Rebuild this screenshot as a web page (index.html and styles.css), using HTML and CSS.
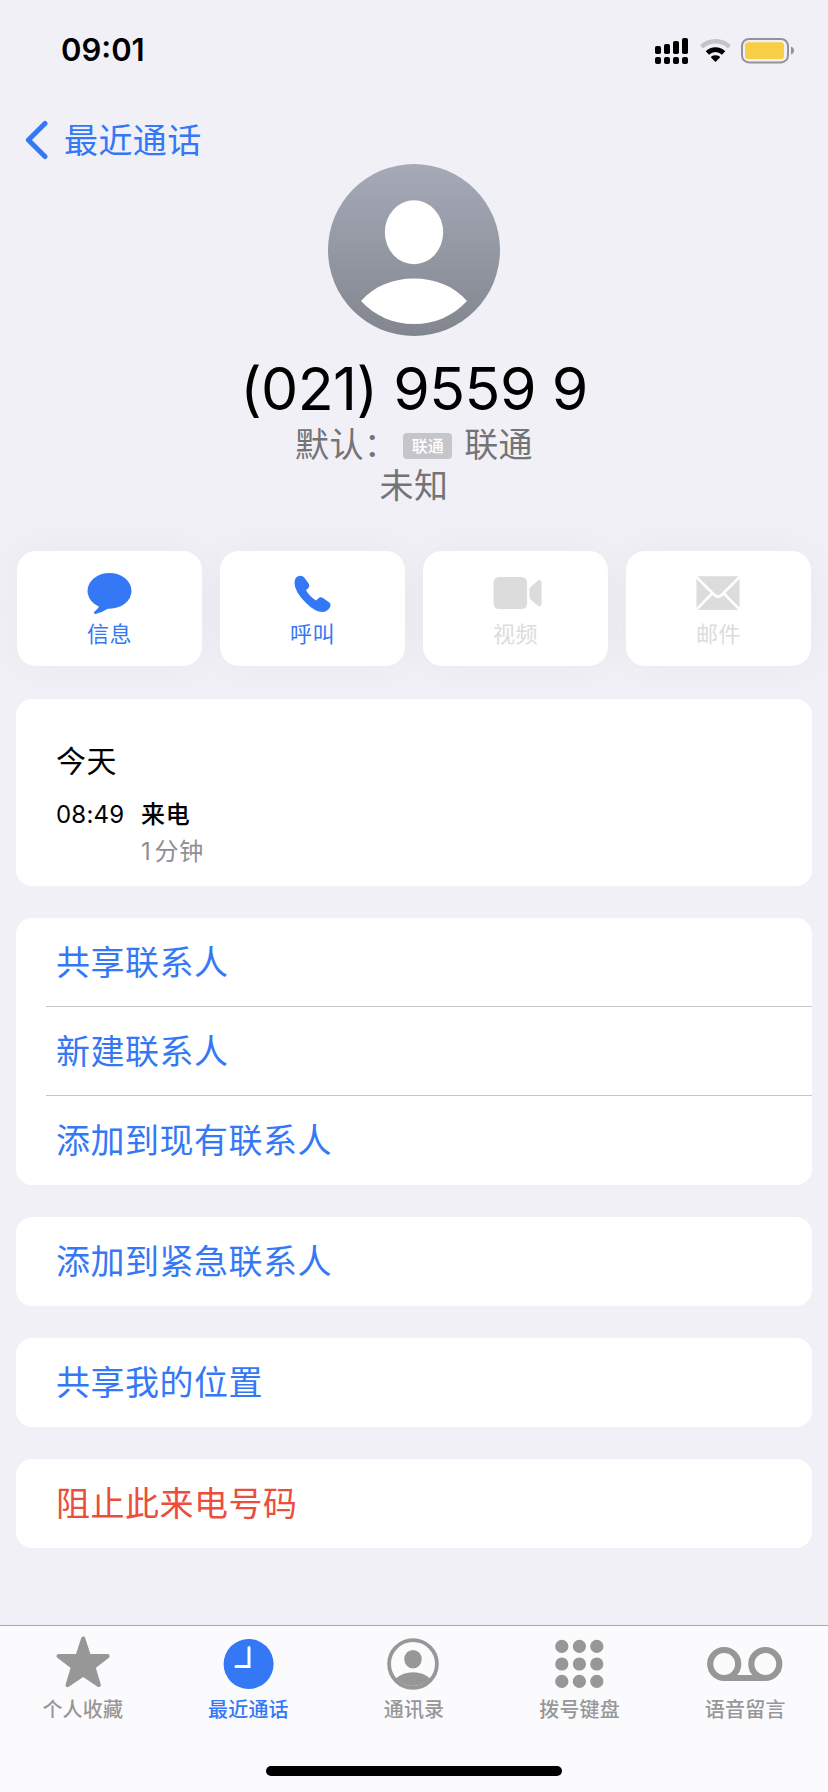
FILE: index.html
```html
<!DOCTYPE html>
<html lang="zh-CN">
<head>
<meta charset="utf-8">
<title>最近通话</title>
<link rel="stylesheet" href="styles.css">
</head>
<body>
<div class="screen">
  <div class="status">
    <span class="clock">09:01</span>
    <svg class="status-icons" width="142" height="30" viewBox="0 0 142 30">
      <rect x="1" y="11" width="6" height="8" rx="1.8"/>
      <rect x="10" y="9" width="6" height="10" rx="1.8"/>
      <rect x="19" y="6" width="6" height="13" rx="1.8"/>
      <rect x="28" y="3" width="6" height="16" rx="1.8"/>
      <rect x="1" y="22" width="6" height="7" rx="2"/>
      <rect x="10" y="22" width="6" height="7" rx="2"/>
      <rect x="19" y="22" width="6" height="7" rx="2"/>
      <rect x="28" y="22" width="6" height="7" rx="2"/>
      <path d="M47.6 11.8A20 20 0 0 1 75.4 11.8" fill="none" stroke="#c3c3c8" stroke-width="4.6"/>
      <path d="M53.4 18A11.6 11.6 0 0 1 69.6 18" fill="none" stroke="#000" stroke-width="4.8"/>
      <path d="M61.5 27L57 22.6Q56.8 20.3 61.5 20.2Q66.2 20.3 66 22.6Z"/>
      <rect x="88" y="4" width="46" height="23.4" rx="7" fill="none" stroke="#929297" stroke-width="2"/>
      <rect x="91" y="7.2" width="39" height="16.9" rx="3.4" fill="#f7ce46"/>
      <path d="M137 11.6Q140 12.8 140 15.6T137 19.6Z" fill="#929297"/>
    </svg>
  </div>

  <div class="nav">
    <svg width="24" height="40" viewBox="0 0 24 40"><path d="M21 3.4L4.4 20L21 36.6" fill="none" stroke="#3478f6" stroke-width="5" stroke-linecap="round" stroke-linejoin="round"/></svg>
    <span class="back">最近通话</span>
  </div>

  <div class="profile">
    <svg class="avatar" width="172" height="172" viewBox="0 0 172 172">
      <defs><linearGradient id="shade" x1="0" y1="0" x2="0" y2="1"><stop offset="0" stop-color="#a6aab8"/><stop offset="1" stop-color="#82868e"/></linearGradient></defs>
      <circle cx="86" cy="86" r="86" fill="url(#shade)"/>
      <ellipse cx="86" cy="68.3" rx="29.2" ry="32" fill="#fff"/>
      <path d="M33 137C46 122 65 114.4 86 114.4S126 122 139 137C125 152 107 160 86 160S47 152 33 137Z" fill="#fff"/>
    </svg>
    <div class="number">(021) 9559 9</div>
    <div class="line"><span>默认：</span><span class="sim">联通</span><span>联通</span></div>
    <div class="line">未知</div>
  </div>

  <div class="actions">
    <div class="action">
      <svg width="56" height="48" viewBox="0 0 56 48"><ellipse cx="27.5" cy="20.8" rx="22" ry="17.9"/><path d="M15 33L17.2 36.5Q15.5 39 12.6 41.6Q11 43.8 13.4 44Q20 42.8 26 38.5L30 34Z"/></svg>
      <span>信息</span>
    </div>
    <div class="action">
      <svg width="56" height="48" viewBox="0 0 56 48"><path d="M13 6.3Q17 4.8 19.2 7.6L23.6 13.6Q25.2 16 23.4 18L21 20.3Q24.5 26.5 31 30.5L33.5 28.2Q35.5 26.3 38 28L44 32.2Q46.6 34.2 44.8 37.6Q42 42 37.5 42Q30 42 20.5 32.5Q9.5 21.5 9.5 13Q9.5 8 13 6.3Z"/></svg>
      <span>呼叫</span>
    </div>
    <div class="action off">
      <svg width="56" height="48" viewBox="0 0 56 48"><rect x="5.5" y="7" width="33.6" height="32" rx="5.5"/><path d="M41.5 19.5Q41.5 18 42.6 17L49.6 10.8Q53.5 8.4 53.5 12.5V33.5Q53.5 37.6 49.6 35.4L42.6 29.4Q41.5 28.4 41.5 27Z"/></svg>
      <span>视频</span>
    </div>
    <div class="action off">
      <svg width="56" height="48" viewBox="0 0 56 48"><rect x="5.5" y="6.3" width="43" height="33.7" rx="1"/><path d="M5 6.6L23.4 25Q27 28.4 30.6 25L49 6.6M5 40L21 23.6M49 40L33 23.6" fill="none" stroke="#fff" stroke-width="2.6"/></svg>
      <span>邮件</span>
    </div>
  </div>

  <div class="log card">
    <div class="day">今天</div>
    <div class="call">
      <span class="time">08:49</span>
      <div class="kind">来电<span class="length"><span class="count">1</span>分钟</span></div>
    </div>
  </div>

  <div class="card">
    <div class="row">共享联系人</div>
    <div class="row">新建联系人</div>
    <div class="row">添加到现有联系人</div>
  </div>
  <div class="card"><div class="row">添加到紧急联系人</div></div>
  <div class="card"><div class="row">共享我的位置</div></div>
  <div class="card"><div class="row danger">阻止此来电号码</div></div>

  <div class="tabbar">
    <div class="tabs">
      <div class="tab">
        <svg width="84" height="60" viewBox="0 0 84 60"><path d="M42.2 6.6L47.8 24H66.6L52.4 35L57.8 53L42.2 42.5L26.6 53L32 35L17.6 24H36.6Z" stroke="currentColor" stroke-width="4.2" stroke-linejoin="round"/></svg>
        <span>个人收藏</span>
      </div>
      <div class="tab on">
        <svg width="84" height="60" viewBox="0 0 84 60"><circle cx="42.6" cy="32" r="25"/><path d="M43 15.5V34.4H30" fill="none" stroke="#fff" stroke-width="3" stroke-linecap="round"/></svg>
        <span>最近通话</span>
      </div>
      <div class="tab">
        <svg width="84" height="60" viewBox="0 0 84 60"><circle cx="41" cy="32" r="23.9" fill="none" stroke="currentColor" stroke-width="3.8"/><ellipse cx="41" cy="27.2" rx="8.7" ry="9.3"/><path d="M23.8 46.6Q31 40.3 41 40.3T58.2 46.6A23.9 23.9 0 0 1 23.8 46.6Z"/></svg>
        <span>通讯录</span>
      </div>
      <div class="tab">
        <svg width="84" height="60" viewBox="0 0 84 60"><circle cx="23.8" cy="14.4" r="6.6"/><circle cx="41.4" cy="14.4" r="6.6"/><circle cx="58.8" cy="14.4" r="6.6"/><circle cx="23.8" cy="32" r="6.6"/><circle cx="41.4" cy="32" r="6.6"/><circle cx="58.8" cy="32" r="6.6"/><circle cx="23.8" cy="49.4" r="6.6"/><circle cx="41.4" cy="49.4" r="6.6"/><circle cx="58.8" cy="49.4" r="6.6"/></svg>
        <span>拨号键盘</span>
      </div>
      <div class="tab">
        <svg width="84" height="60" viewBox="0 0 84 60"><g fill="none" stroke="currentColor" stroke-width="6.2"><circle cx="21.2" cy="32" r="14"/><circle cx="62.3" cy="32" r="14"/><path d="M21.2 46H62.3"/></g></svg>
        <span>语音留言</span>
      </div>
    </div>
    <div class="home"></div>
  </div>
</div>
</body>
</html>
```
FILE: styles.css
```css
* { box-sizing: border-box; }

body {
  margin: 0;
  background: #f1f0f6;
  font-family: Inter, "Noto Sans CJK SC", sans-serif;
  color: #000;
}

.screen {
  display: flex;
  flex-direction: column;
  width: 828px;
  height: 1792px;
}

svg { display: block; fill: currentColor; flex: none; }

.status {
  display: flex;
  justify-content: space-between;
  align-items: center;
  height: 116px;
  padding: 0 32px 16px 61px;
}

.clock {
  font-size: 31px;
  font-weight: 600;
  line-height: 40px;
}

.nav {
  display: flex;
  align-items: center;
  height: 48px;
  padding-left: 24px;
  gap: 16px;
  color: #3478f6;
}

.back {
  padding-top: 2px;
  font-size: 34px;
  line-height: 46px;
  letter-spacing: 0.4px;
}

.profile {
  display: flex;
  flex-direction: column;
  align-items: center;
}

.number {
  margin-top: 17px;
  font-size: 59px;
  line-height: 71px;
  letter-spacing: -0.6px;
  white-space: nowrap;
  font-feature-settings: "calt" 0;
}

.line {
  display: flex;
  align-items: center;
  font-size: 34px;
  line-height: 41px;
  letter-spacing: 0.4px;
  color: #747477;
}

.sim {
  width: 49px;
  height: 26px;
  margin: 2px 12px 0 5px;
  border-radius: 4px;
  background: #c6c6ca;
  color: #fff;
  font-size: 16px;
  font-weight: 500;
  line-height: 26px;
  text-align: center;
  letter-spacing: 0;
}

.actions {
  display: grid;
  grid-template-columns: repeat(4, 185px);
  gap: 18px;
  margin: 45px 17px 33px;
}

.action {
  display: flex;
  flex-direction: column;
  align-items: center;
  height: 115px;
  padding-top: 19px;
  border-radius: 19px;
  background: #fff;
  box-shadow: 0 0 40px rgba(0, 0, 0, 0.04);
  color: #3478f6;
  font-size: 22px;
  line-height: 33px;
  letter-spacing: 0.4px;
}

.off { color: #dcdcdc; }

.card {
  margin: 0 16px 32px;
  border-radius: 16px;
  background: #fff;
}

.log {
  height: 187px;
  padding: 41px 40px 0;
}

.day {
  font-size: 30px;
  line-height: 42px;
  letter-spacing: 0.6px;
}

.call {
  display: flex;
  margin-top: 14px;
  font-size: 24px;
  line-height: 37px;
  letter-spacing: 0.8px;
}

.time {
  width: 85px;
  letter-spacing: 0.2px;
}

.kind {
  display: flex;
  flex-direction: column;
  font-weight: 500;
}

.length {
  color: #8e8e93;
  font-weight: 400;
}

.count { letter-spacing: 3.6px; }

.row {
  height: 89px;
  padding: 1px 0 0 40px;
  font-size: 34px;
  line-height: 88px;
  letter-spacing: 0.5px;
  color: #3478f6;
  background: linear-gradient(#c6c6c8, #c6c6c8) 30px 100% / 100% 1px no-repeat;
}

.row:last-child { background: none; }

.danger { color: #eb4e3d; }

.tabbar {
  display: flex;
  flex-direction: column;
  align-items: center;
  height: 167px;
  margin-top: auto;
  border-top: 1px solid #a9a9ae;
  background: #fbfbfd;
}

.tabs {
  display: grid;
  grid-template-columns: repeat(5, 1fr);
  width: 100%;
  padding-top: 6px;
}

.tab {
  display: flex;
  flex-direction: column;
  align-items: center;
  color: #979798;
  font-size: 20px;
  font-weight: 500;
  line-height: 36px;
  letter-spacing: 0.2px;
}

.on { color: #3478f6; }

.home {
  width: 296px;
  height: 10px;
  margin-top: 38px;
  border-radius: 5px;
  background: #000;
}
```
